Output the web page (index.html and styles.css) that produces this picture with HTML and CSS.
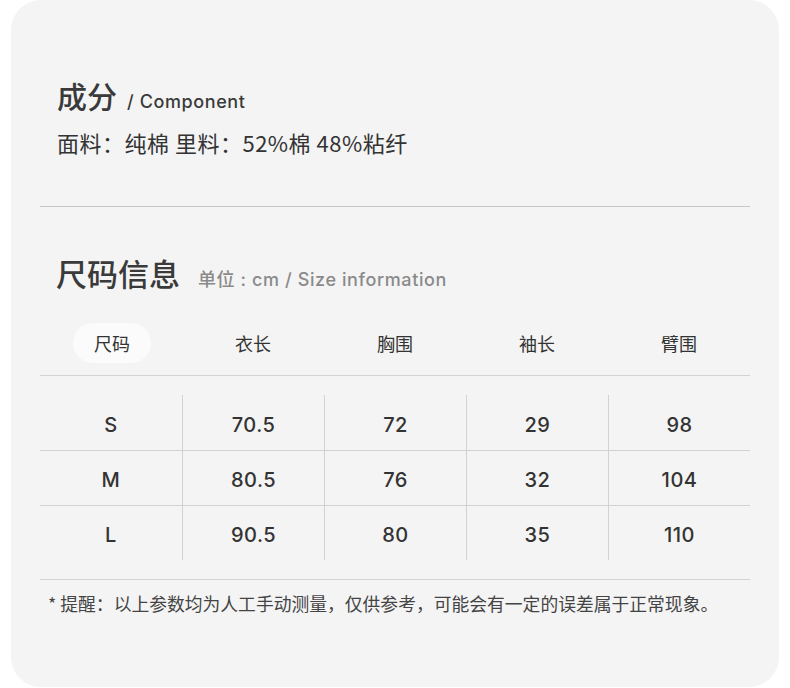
FILE: index.html
```html
<!DOCTYPE html>
<html lang="zh-CN">
<head>
<meta charset="utf-8">
<link rel="stylesheet" href="styles.css">
</head>
<body>
<div class="card">
  <section class="comp">
    <div class="title-row">
      <span class="title">成分</span>
      <span class="sub-en">/ Component</span>
    </div>
    <p class="material">面料：纯棉 里料：52%棉 48%粘纤</p>
  </section>
  <div class="divider"></div>
  <section class="size">
    <div class="title-row size-title">
      <span class="title">尺码信息</span>
      <span class="sub-grey">单位 : cm / Size information</span>
    </div>
    <div class="table">
      <div class="thead">
        <div class="th"><span class="pill">尺码</span></div>
        <div class="th">衣长</div>
        <div class="th">胸围</div>
        <div class="th">袖长</div>
        <div class="th">臂围</div>
      </div>
      <div class="tbody">
        <div class="tr"><div class="td">S</div><div class="td">70.5</div><div class="td">72</div><div class="td">29</div><div class="td">98</div></div>
        <div class="tr"><div class="td">M</div><div class="td">80.5</div><div class="td">76</div><div class="td">32</div><div class="td">104</div></div>
        <div class="tr"><div class="td">L</div><div class="td">90.5</div><div class="td">80</div><div class="td">35</div><div class="td">110</div></div>
      </div>
    </div>
    <p class="note">* 提醒：以上参数均为人工手动测量，仅供参考，可能会有一定的误差属于正常现象。</p>
  </section>
</div>
</body>
</html>
```
FILE: styles.css
```css
html, body {
  margin: 0;
  padding: 0;
  background: #ffffff;
}
body {
  font-family: "Noto Sans CJK SC", "Noto Sans", sans-serif;
  color: #333333;
}
.card {
  margin-left: 11px;
  width: 768px;
  height: 687px;
  box-sizing: border-box;
  background: #f4f4f4;
  border-radius: 30px;
  padding: 0 29px;
  overflow: hidden;
}
.comp {
  padding: 75px 17px 0;
}
.title-row {
  display: flex;
  align-items: baseline;
  height: 40px;
}
.title {
  font-size: 30px;
  line-height: 40px;
  font-weight: 500;
  color: #3a3a3a;
}
.sub-en {
  margin-left: 10px;
  font-family: "Inter", "Noto Sans CJK SC", sans-serif;
  font-size: 18px;
  font-weight: 500;
  letter-spacing: 0.6px;
  color: #3a3a3a;
}
.material {
  margin: 12px 0 0;
  font-size: 22px;
  line-height: 30px;
  letter-spacing: 0.5px;
  color: #333333;
}
.divider {
  margin-top: 49px;
  height: 1px;
  background: #c6c6c6;
}
.size-title {
  margin: 46px 0 0 16px;
}
.size-title .title {
  font-size: 31px;
}
.sub-grey {
  margin-left: 18px;
  font-family: "Inter", "Noto Sans CJK SC", sans-serif;
  font-size: 18px;
  font-weight: 500;
  letter-spacing: 0.6px;
  color: #8a8a8a;
}
.table {
  margin-top: 30px;
}
.thead {
  display: grid;
  grid-template-columns: repeat(5, 1fr);
  height: 52px;
  border-bottom: 1px solid #d2d2d2;
}
.th {
  display: flex;
  justify-content: center;
  align-items: flex-start;
  font-size: 18px;
  line-height: 40px;
  color: #333333;
}
.pill {
  display: block;
  width: 78px;
  height: 40px;
  margin-left: 2px;
  text-align: center;
  background: #fbfbfb;
  border-radius: 20px;
}
.tbody {
  padding: 19px 0 19px;
  border-bottom: 1px solid #d2d2d2;
}
.tr {
  display: grid;
  grid-template-columns: repeat(5, 1fr);
  height: 55px;
  box-sizing: border-box;
}
.tr + .tr {
  border-top: 1px solid #d2d2d2;
}
.td {
  display: flex;
  align-items: center;
  justify-content: center;
  padding-top: 4px;
  font-family: "Inter", sans-serif;
  font-size: 20px;
  font-weight: 500;
  letter-spacing: 0.5px;
  color: #333333;
}
.td + .td {
  border-left: 1px solid #d2d2d2;
}
.note {
  margin: 10px 0 0 8px;
  font-size: 17.8px;
  line-height: 26px;
  color: #444444;
}
```
